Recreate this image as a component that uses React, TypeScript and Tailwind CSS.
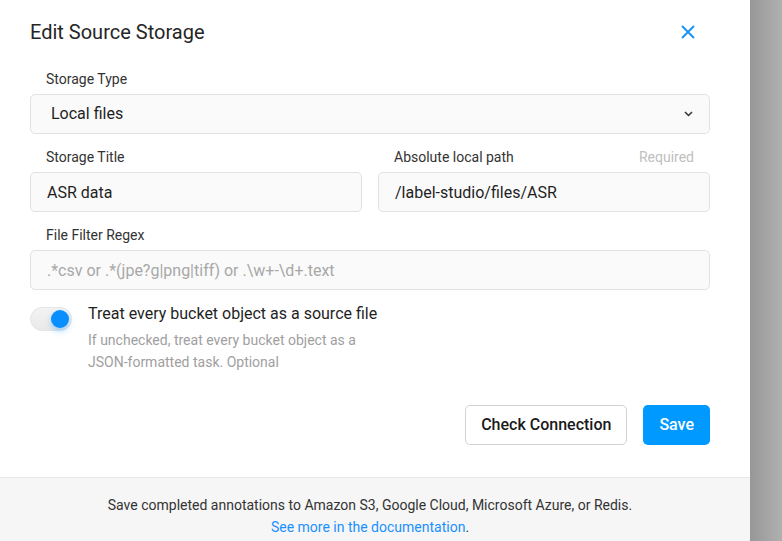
import { useState } from 'react';

const inputClass =
  'w-full h-10 px-4 rounded-[5px] border border-[#e2e2e2] bg-[#fafafa] text-base text-[#1f1f1f] placeholder:text-[#a8a8a8] outline-none';

function Field({
  label,
  hint,
  children,
}: {
  label: string;
  hint?: string;
  children: React.ReactNode;
}) {
  return (
    <div className="flex-1">
      <div className="flex items-center justify-between h-[22px] px-4 mb-1 text-sm leading-[22px]">
        <span className="text-[#333]">{label}</span>
        {hint && <span className="text-[#c0c0c0]">{hint}</span>}
      </div>
      {children}
    </div>
  );
}

export default function App() {
  const [title, setTitle] = useState('ASR data');
  const [path, setPath] = useState('/label-studio/files/ASR');
  const [regex, setRegex] = useState('');
  const [useBlob, setUseBlob] = useState(true);

  return (
    <div className="flex h-[541px] w-[782px] overflow-hidden font-['Roboto',sans-serif]">
      <div className="flex w-[750px] flex-col bg-white">
        <div className="pl-[30px] pr-10">
          {/* Header */}
          <div className="flex h-16 items-center justify-between">
            <h2 className="text-xl text-[#262626]">Edit Source Storage</h2>
            <button className="flex h-11 w-11 items-center justify-center text-[#1a94f5]">
              <svg width="14" height="14" viewBox="0 0 14 14" fill="none">
                <path d="M1 1L13 13M13 1L1 13" stroke="currentColor" strokeWidth="2" />
              </svg>
            </button>
          </div>

          {/* Form */}
          <div className="mt-1 space-y-3">
            <Field label="Storage Type">
              <div className="flex h-10 items-center justify-between rounded-[5px] border border-[#e2e2e2] bg-[#fafafa] pl-5 pr-4">
                <span className="text-base text-[#1f1f1f]">Local files</span>
                <svg width="9" height="6" viewBox="0 0 9 6" fill="none">
                  <path d="M1 1L4.5 4.5L8 1" stroke="#333" strokeWidth="1.5" />
                </svg>
              </div>
            </Field>

            <div className="flex gap-4">
              <Field label="Storage Title">
                <input className={inputClass} value={title} onChange={(e) => setTitle(e.target.value)} />
              </Field>
              <Field label="Absolute local path" hint="Required">
                <input className={inputClass} value={path} onChange={(e) => setPath(e.target.value)} />
              </Field>
            </div>

            <Field label="File Filter Regex">
              <input
                className={inputClass}
                value={regex}
                onChange={(e) => setRegex(e.target.value)}
                placeholder=".*csv or .*(jpe?g|png|tiff) or .\w+-\d+.text"
              />
            </Field>
          </div>

          {/* Toggle */}
          <div className="mt-[13px] flex gap-4">
            <button
              onClick={() => setUseBlob(!useBlob)}
              className="relative mt-1 h-6 w-[42px] shrink-0 rounded-full border border-[#e6e6e6] bg-gradient-to-b from-[#f3f3f3] to-[#e9e9e9]"
            >
              <span
                className={
                  useBlob
                    ? 'absolute right-[2px] top-[2px] h-[18px] w-[18px] rounded-full bg-[#0a8fff] shadow-[0_3px_6px_rgba(10,143,255,0.35)]'
                    : 'absolute left-[2px] top-[2px] h-[18px] w-[18px] rounded-full bg-white shadow'
                }
              />
            </button>
            <div>
              <div className="text-base leading-[22px] text-[#1f1f1f]">
                Treat every bucket object as a source file
              </div>
              <div className="mt-1 w-[280px] text-sm leading-[22px] text-[#a0a0a0]">
                If unchecked, treat every bucket object as a JSON-formatted task. Optional
              </div>
            </div>
          </div>

          {/* Actions */}
          <div className="mt-8 flex justify-end gap-4">
            <button className="h-10 rounded-[5px] border border-[#d2d2d2] bg-white px-[15px] text-base font-medium text-[#1a1a1a]">
              Check Connection
            </button>
            <button className="h-10 rounded-[5px] bg-[#0099ff] px-4 text-base font-medium text-white">
              Save
            </button>
          </div>
        </div>

        {/* Footer */}
        <div className="mt-[32px] flex-1 border-t border-[#e8e8e8] bg-[#f6f6f6] pr-[10px] pt-4 text-center text-sm leading-[22px] text-[#333]">
          <p>Save completed annotations to Amazon S3, Google Cloud, Microsoft Azure, or Redis.</p>
          <p>
            <a href="#" className="text-[#1a90ff]">
              See more in the documentation
            </a>
            .
          </p>
        </div>
      </div>
      <div className="flex-1 bg-gradient-to-r from-[#979797] to-[#b0b0b0]" />
    </div>
  );
}
